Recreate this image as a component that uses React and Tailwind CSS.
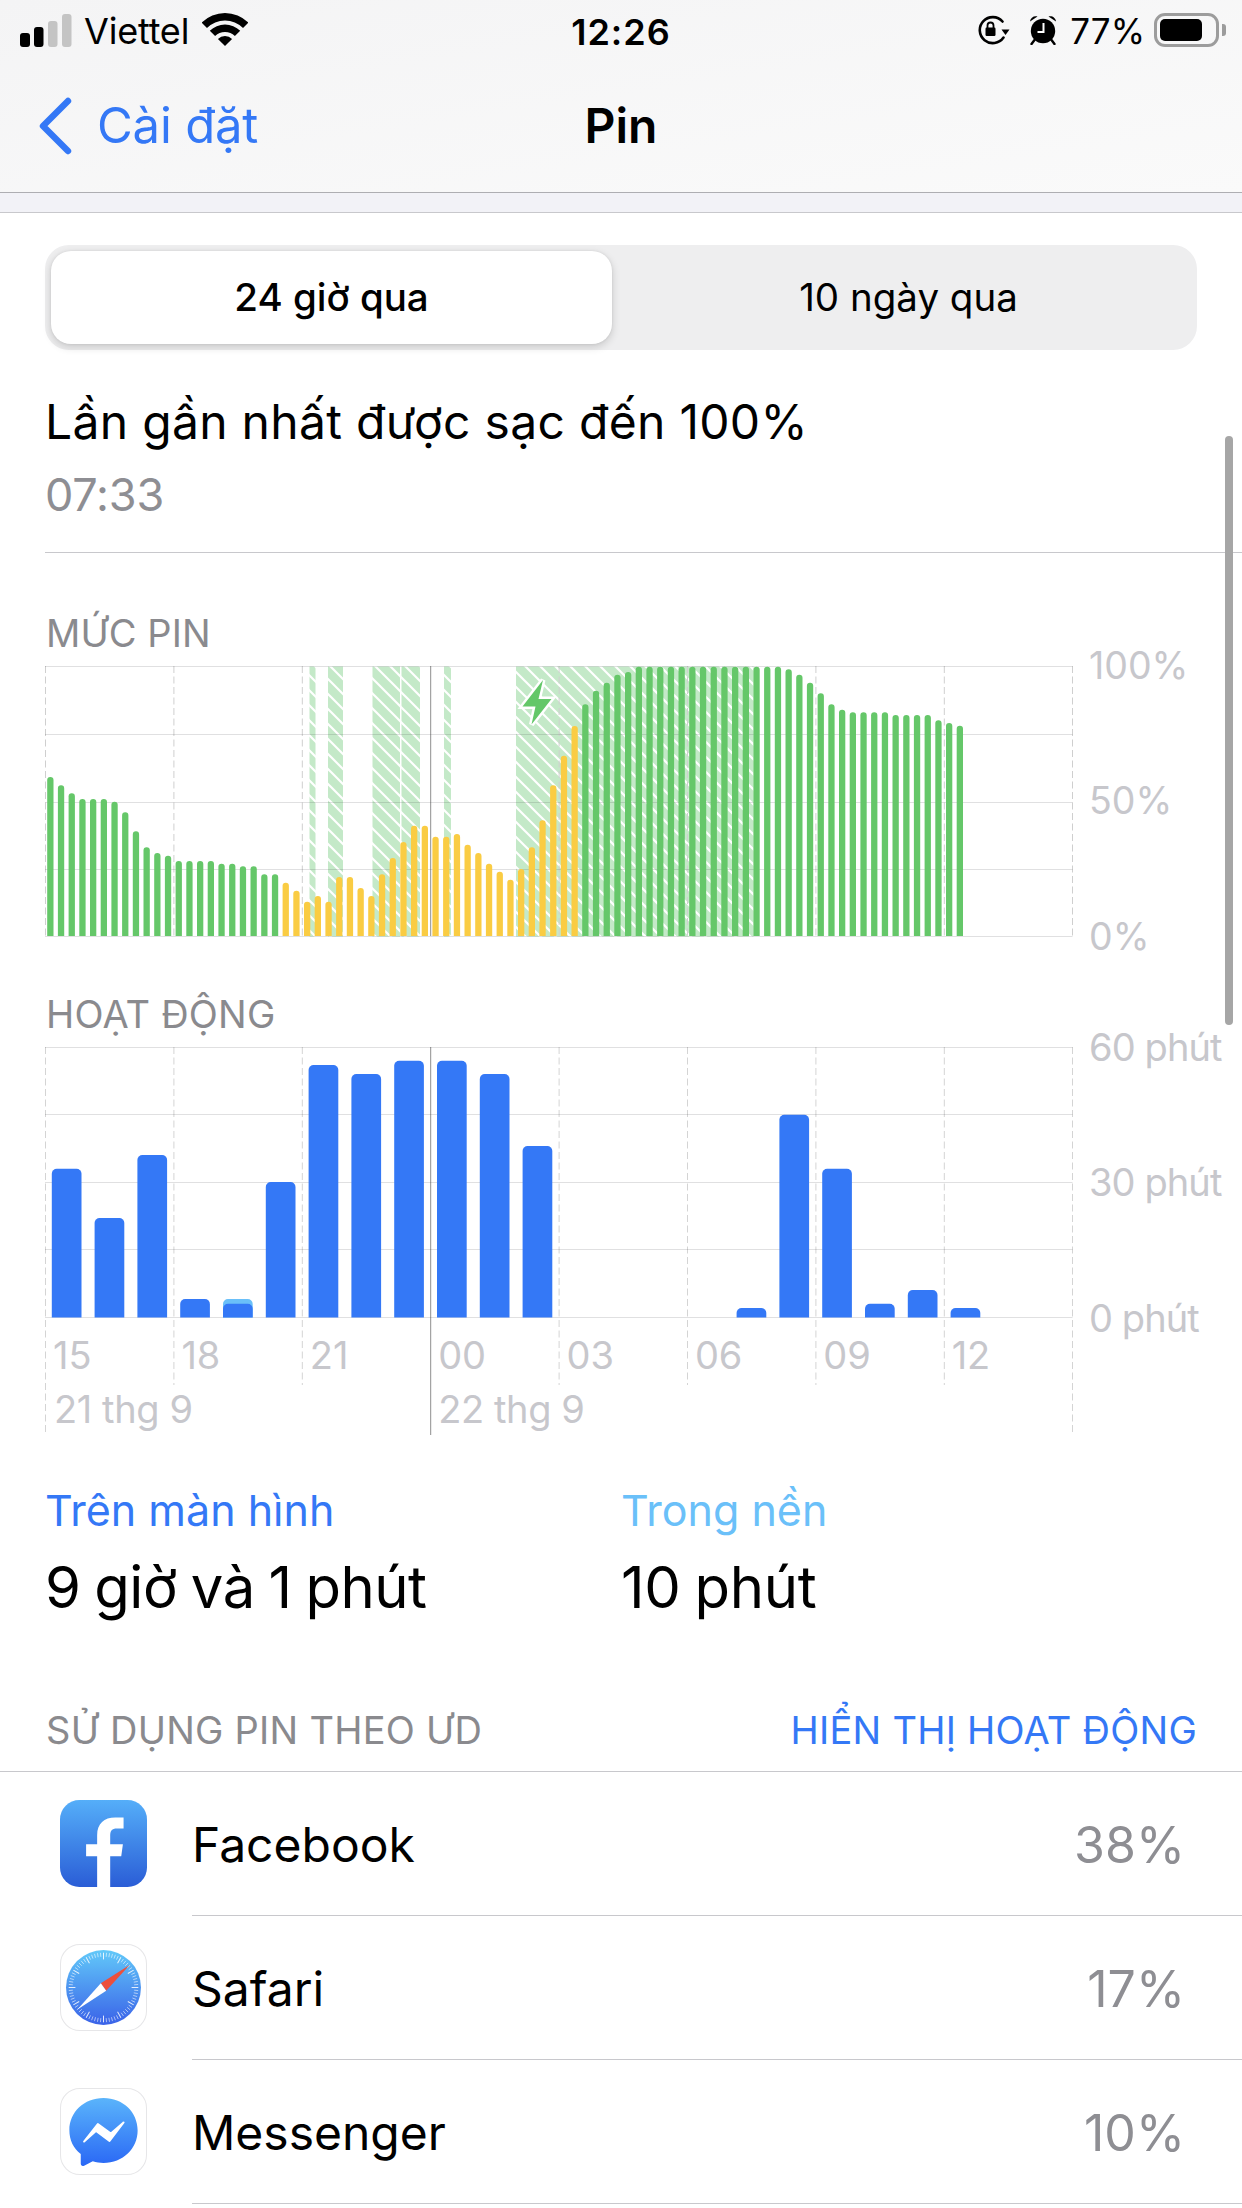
import React from "react";

const BLUE = "#3478f6";

const batteryTops = [
  412,437,461,478,478,478,486,518,575,623,640,648,664,664,664,664,672,672,680,680,704,704,
  729,753,786,769,786,712,712,745,769,704,655,607,558,558,591,591,583,615,640,672,696,720,688,623,542,437,348,259,
  194,153,129,105,97,81,81,81,81,81,81,81,81,81,81,81,81,81,81,89,105,129,161,194,210,218,218,218,218,226,226,226,226,242,250,258,
];
const isYellow = (i) => i >= 22 && i <= 49;

const hatchRanges = [[309.5,315.5],[328,343],[372.5,400],[401.5,420],[444,451],[516,753.5]];

const activity = [447,595,406,838,838,487,136,163,123,123,163,379,null,null,null,null,865,285,447,852,811,865];

function sector(r1, r2) {
  const s = Math.SQRT1_2;
  const c = [23, 33];
  if (r1 === 0)
    return `M${c[0]} ${c[1]}L${c[0]-r2*s} ${c[1]-r2*s}A${r2} ${r2} 0 0 1 ${c[0]+r2*s} ${c[1]-r2*s}Z`;
  return `M${c[0]-r1*s} ${c[1]-r1*s}L${c[0]-r2*s} ${c[1]-r2*s}A${r2} ${r2} 0 0 1 ${c[0]+r2*s} ${c[1]-r2*s}L${c[0]+r1*s} ${c[1]-r1*s}A${r1} ${r1} 0 0 0 ${c[0]-r1*s} ${c[1]-r1*s}Z`;
}

function Signal() {
  return (
    <svg width="52" height="33" viewBox="0 0 52 33" className="shrink-0">
      <rect x="0" y="19" width="10" height="14" rx="3" fill="#000" />
      <rect x="14" y="13" width="9.5" height="20" rx="3" fill="#000" />
      <rect x="28" y="7" width="9.5" height="26" rx="3" fill="#c4c4c4" />
      <rect x="42" y="0" width="9.5" height="33" rx="3" fill="#c4c4c4" />
    </svg>
  );
}

function Wifi() {
  return (
    <svg width="46" height="34" viewBox="0 0 46 34" className="shrink-0">
      <path d={sector(25.5, 33)} fill="#000" />
      <path d={sector(14, 21.5)} fill="#000" />
      <path d={sector(0, 10)} fill="#000" />
    </svg>
  );
}

function RotationLock() {
  return (
    <svg width="33" height="30" viewBox="0 0 33 30" className="shrink-0">
      <path d="M26.5 22.5A13 13 0 1 1 25.5 6.5" fill="none" stroke="#000" strokeWidth="2.6" strokeLinecap="round" />
      <path d="M24.5 14.5L32.5 14.5L28.5 20Z" fill="#000" />
      <rect x="8.5" y="12.5" width="10" height="8.5" rx="1.2" fill="#000" />
      <path d="M10.5 13V10.5a3 3 0 0 1 6 0V13" fill="none" stroke="#000" strokeWidth="1.8" />
    </svg>
  );
}

function Alarm() {
  return (
    <svg width="28" height="30" viewBox="0 0 28 30" className="shrink-0">
      <circle cx="14" cy="16" r="12.2" fill="#000" />
      <path d="M14.5 8V17H8.5" fill="none" stroke="#fff" strokeWidth="2" />
      <path d="M1 6.5C1.5 2.5 5 0.5 8.5 1.5Z" fill="#000" />
      <path d="M27 6.5C26.5 2.5 23 0.5 19.5 1.5Z" fill="#000" />
      <path d="M5.5 25L2.5 29M22.5 25L25.5 29" stroke="#000" strokeWidth="2.4" strokeLinecap="round" />
    </svg>
  );
}

function Battery() {
  return (
    <div className="flex items-center shrink-0 gap-[3px]">
      <div className="w-[65px] h-[34px] rounded-[11px] border-[3px] border-[#9c9c9c] p-[3px] box-border">
        <div className="w-[42px] h-[22px] rounded-[5px] bg-black" />
      </div>
      <div className="w-[4px] h-[12px] rounded-r-[3px] bg-[#9c9c9c]" />
    </div>
  );
}

function StatusBar() {
  return (
    <div className="relative h-[60px] flex items-center justify-between pl-[20px] pr-[16px] text-black">
      <div className="flex items-center">
        <Signal />
        <span className="ml-[12px] pt-[2px] text-[36px] leading-[60px] tracking-[-0.2px]">Viettel</span>
        <span className="ml-[13px] flex"><Wifi /></span>
      </div>
      <span className="absolute left-0 right-0 pt-[3px] text-center text-[36px] leading-[60px] font-semibold tracking-[1px]">12:26</span>
      <div className="flex items-center">
        <RotationLock />
        <span className="ml-[19px] flex"><Alarm /></span>
        <span className="ml-[13px] mr-[9px] pt-[2px] text-[35px] leading-[60px]">77%</span>
        <Battery />
      </div>
    </div>
  );
}

function NavBar() {
  return (
    <div className="relative h-[132px] pt-[29px] flex items-start">
      <svg width="40" height="62" viewBox="0 0 40 62" className="ml-[36px] mt-[6px] shrink-0">
        <path d="M32 6L7 31L32 56" fill="none" stroke={BLUE} strokeWidth="6.4" strokeLinecap="round" strokeLinejoin="round" />
      </svg>
      <span className="ml-[21px] text-[49px] leading-[74px] tracking-[-0.2px] text-[#3478f6]">Cài đặt</span>
      <span className="absolute left-0 right-0 top-[29px] text-center text-[48px] leading-[74px] font-semibold text-black">Pin</span>
    </div>
  );
}

function Segmented() {
  return (
    <div className="mx-[45px] mt-[32px] h-[105px] rounded-[24px] bg-[#eeeeef] p-[6px] flex text-[38.5px] text-black">
      <div className="w-[561px] rounded-[20px] bg-white shadow-[0_3px_8px_rgba(0,0,0,0.16),0_0_3px_rgba(0,0,0,0.08)] flex items-center justify-center font-[550]">
        24 giờ qua
      </div>
      <div className="flex-1 pl-[14px] flex items-center justify-center">10 ngày qua</div>
    </div>
  );
}

function barPath(x, top, bottom, w, r) {
  const t = Math.min(top + r, bottom);
  return `M${x} ${bottom}V${t}A${r} ${r} 0 0 1 ${x + r} ${top}H${x + w - r}A${r} ${r} 0 0 1 ${x + w} ${t}V${bottom}Z`;
}

const GRID_X = [0, 128.4, 256.8, 385.2, 513.6, 642, 770.4, 898.8, 1027];

function BatteryChart() {
  return (
    <div className="relative ml-[45px] mt-[11px] h-[271px] flex">
      <svg width="1029" height="271" viewBox="0 0 1029 271" className="shrink-0">
        <defs>
          <pattern id="hatch" width="15" height="15" patternUnits="userSpaceOnUse">
            <rect width="15" height="15" fill="#c4e9c8" />
            <path d="M-3 -3L18 18M-3 12L3 18M12 -3L18 3" stroke="#fff" strokeWidth="2.2" />
          </pattern>
        </defs>
        {hatchRanges.map(([a, b]) => (
          <rect key={a} x={a - 45} y="0.5" width={b - a} height="270" fill="url(#hatch)" />
        ))}
        {GRID_X.map((x, i) => (
          <line key={x} x1={x + 0.5} x2={x + 0.5} y1="0" y2="270" stroke={i === 3 ? "#8e8e8e" : "#cfcfcf"} strokeWidth="1" strokeDasharray={i === 3 ? undefined : "7 3.5"} />
        ))}
        {[0.5, 68.5, 136.5, 203.5, 270.5].map((y) => (
          <line key={y} x1="0" x2="1027.5" y1={y} y2={y} stroke="#3c3c43" strokeOpacity="0.16" />
        ))}
        {batteryTops.map((t, i) => {
          const x = 2.2 + 10.7 * i;
          const top = (t - 79) / 3;
          return <path key={i} d={barPath(x, top, 270, 6.3, 3.1)} fill={isYellow(i) ? "#facc43" : "#65c769"} />;
        })}
        <path d="M498 14L477.5 40.5L490.5 40.5L486.5 58.5L506.5 33L493.5 33Z" fill="#63c768" stroke="#fff" strokeWidth="5" strokeLinejoin="miter" paintOrder="stroke" />
      </svg>
      <div className="ml-[15px] flex flex-col justify-between h-[271px] text-[37.5px] text-[#c7c7cc]">
        <span className="h-0 flex items-center">100%</span>
        <span className="h-0 flex items-center">50%</span>
        <span className="h-0 flex items-center">0%</span>
      </div>
    </div>
  );
}

function ActivityChart() {
  const hours = ["15", "18", "21", "00", "03", "06", "09", "12"];
  return (
    <div className="relative ml-[45px] mt-[11px] h-[389px] flex">
      <svg width="1029" height="389" viewBox="0 0 1029 389" className="shrink-0">
        {GRID_X.map((x, i) => {
          const long = i === 0 || i === 3 || i === 8;
          return (
            <line key={x} x1={x + 0.5} x2={x + 0.5} y1="0" y2={long ? 388 : 338} stroke={i === 3 ? "#8e8e8e" : "#d4d4d4"} strokeDasharray={i === 3 ? undefined : "7 3.5"} />
          );
        })}
        {[0.5, 67.5, 135.5, 202.5, 270.5].map((y) => (
          <line key={y} x1="0" x2="1027.5" y1={y} y2={y} stroke="#3c3c43" strokeOpacity="0.16" />
        ))}
        {activity.map((t, i) => {
          if (t === null) return null;
          const x = 6.8 + 42.8 * i;
          const top = (t - 82) / 3;
          return (
            <g key={i}>
              <path d={barPath(x, top, 270.5, 29.7, 5)} fill={i === 4 ? "#6ac0f9" : BLUE} />
              {i === 4 && <path d={barPath(x, (852 - 82) / 3, 270.5, 29.7, 5)} fill={BLUE} />}
            </g>
          );
        })}
      </svg>
      <div className="ml-[15px] flex flex-col justify-between h-[271px] text-[38px] tracking-[-0.9px] text-[#c7c7cc]">
        <span className="h-0 flex items-center whitespace-nowrap">60 phút</span>
        <span className="h-0 flex items-center whitespace-nowrap">30 phút</span>
        <span className="h-0 flex items-center whitespace-nowrap">0 phút</span>
      </div>
      <div className="absolute left-0 top-[286px] w-[1027px] flex text-[38px] leading-[44px] text-[#c7c7cc]">
        {hours.map((h) => (
          <span key={h} className="w-[128.4px] pl-[8px]">{h}</span>
        ))}
      </div>
      <div className="absolute left-0 top-[340px] w-[1027px] flex text-[38px] leading-[44px] tracking-[-0.4px] text-[#c7c7cc]">
        <span className="w-[385.2px] pl-[9px]">21 thg 9</span>
        <span className="pl-[8px]">22 thg 9</span>
      </div>
    </div>
  );
}

function FacebookIcon() {
  return (
    <svg width="87" height="87" viewBox="0 0 260 260" className="shrink-0">
      <defs>
        <linearGradient id="fb" x1="0" y1="0" x2="0" y2="1">
          <stop offset="0" stopColor="#55aef9" />
          <stop offset="1" stopColor="#2a5dd6" />
        </linearGradient>
      </defs>
      <rect width="260" height="260" rx="58" fill="url(#fb)" />
      <path d="M111 260V168H78V132H111V105C111 70 132 52 165 52H190V85H170C155 85 150 92 150 107V132H188L183 168H150V260Z" fill="#fff" />
    </svg>
  );
}

function SafariIcon() {
  const ticks = Array.from({ length: 72 }, (_, i) => i);
  return (
    <svg width="87" height="87" viewBox="0 0 260 260" className="shrink-0">
      <defs>
        <linearGradient id="sf" x1="0" y1="0" x2="0" y2="1">
          <stop offset="0" stopColor="#62c9f9" />
          <stop offset="1" stopColor="#3a62e8" />
        </linearGradient>
      </defs>
      <rect x="1.5" y="1.5" width="257" height="257" rx="58" fill="#fff" stroke="#e6e6e8" strokeWidth="3" />
      <circle cx="130" cy="130" r="112" fill="url(#sf)" />
      {ticks.map((i) => {
        const a = (i * Math.PI) / 36;
        const r2 = 104;
        const r1 = i % 6 === 0 ? 84 : 92;
        return (
          <line key={i} x1={130 + r1 * Math.sin(a)} y1={130 - r1 * Math.cos(a)} x2={130 + r2 * Math.sin(a)} y2={130 - r2 * Math.cos(a)} stroke="#fff" strokeOpacity="0.85" strokeWidth={i % 6 === 0 ? 3 : 2} />
        );
      })}
      <path d="M208 63L138 140L122 117Z" fill="#ec4f3d" />
      <path d="M52 196L122 117L138 140Z" fill="#fff" />
    </svg>
  );
}

function MessengerIcon() {
  return (
    <svg width="87" height="87" viewBox="0 0 260 260" className="shrink-0">
      <defs>
        <linearGradient id="ms" x1="0" y1="0" x2="0" y2="1">
          <stop offset="0" stopColor="#5ab4fb" />
          <stop offset="1" stopColor="#2a68f5" />
        </linearGradient>
      </defs>
      <rect x="1.5" y="1.5" width="257" height="257" rx="58" fill="#fff" stroke="#e6e6e8" strokeWidth="3" />
      <path d="M130 30C72 30 28 72 28 126C28 155 40 180 62 197V226C62 232 67 235 72 232L98 219C108 222 119 224 130 224C188 224 232 181 232 127C232 72 188 30 130 30Z" fill="url(#ms)" />
      <path d="M72 160L113 108L152 136L190 103L148 158L108 128Z" fill="#fff" stroke="#fff" strokeWidth="6" strokeLinejoin="round" />
    </svg>
  );
}

function AppRow({ icon, name, pct }) {
  return (
    <div className="flex items-center h-[144px] pl-[60px]">
      <div className="mb-[1px] flex">{icon}</div>
      <div className="ml-[45px] flex-1 h-[144px] pt-[3px] border-b border-[#c8c8cc] flex items-center justify-between pr-[57px] text-[48px]">
        <span className="text-black">{name}</span>
        <span className="text-[#8e8e93] text-[50px]">{pct}</span>
      </div>
    </div>
  );
}

export default function App() {
  return (
    <div className="relative w-[1242px] h-[2208px] overflow-hidden bg-white font-['Inter',sans-serif]">
      <div className="h-[193px] bg-gradient-to-br from-[#f4f4f5] to-[#fafafa] border-b border-[#aeaeb2]">
        <StatusBar />
        <NavBar />
      </div>
      <div className="h-[20px] bg-[#f2f2f7] border-b border-[#c8c8cc]" />

      <Segmented />

      <div className="ml-[45px] mt-[42px] text-[48px] leading-[60px] text-black tracking-[0.3px]">Lần gần nhất được sạc đến 100%</div>
      <div className="ml-[45px] mt-[18px] text-[45px] leading-[50px] tracking-[-0.2px] text-[#8e8e93]">07:33</div>
      <div className="ml-[45px] mt-[32px] border-b border-[#c8c8cc]" />

      <div className="ml-[46px] mt-[58px] text-[38px] leading-[44px] tracking-[0.1px] text-[#8a8a8e]">MỨC PIN</div>
      <BatteryChart />

      <div className="ml-[46px] mt-[55px] text-[38px] leading-[44px] tracking-[0.2px] text-[#8a8a8e]">HOẠT ĐỘNG</div>
      <ActivityChart />

      <div className="mt-[48px] ml-[45px] flex">
        <div className="w-[576px]">
          <div className="text-[43px] leading-[52px] text-[#3478f6]">Trên màn hình</div>
          <div className="mt-[13px] text-[58px] leading-[76px] tracking-[-0.5px] [word-spacing:-2px] text-black">9 giờ và 1 phút</div>
        </div>
        <div>
          <div className="text-[43px] leading-[52px] text-[#6ac0f9]">Trong nền</div>
          <div className="mt-[13px] text-[58px] leading-[76px] tracking-[-0.3px] [word-spacing:-2px] text-black">10 phút</div>
        </div>
      </div>

      <div className="mt-[83px] ml-[46px] mr-[45px] flex justify-between text-[38px] leading-[44px] tracking-[0.25px]">
        <span className="text-[#8a8a8e]">SỬ DỤNG PIN THEO ƯD</span>
        <span className="text-[#3478f6]">HIỂN THỊ HOẠT ĐỘNG</span>
      </div>
      <div className="mt-[19px] border-b border-[#c8c8cc]" />

      <AppRow icon={<FacebookIcon />} name="Facebook" pct="38%" />
      <AppRow icon={<SafariIcon />} name="Safari" pct="17%" />
      <AppRow icon={<MessengerIcon />} name="Messenger" pct="10%" />

      <div className="absolute left-[1225px] top-[436px] w-[8px] h-[589px] rounded-full bg-[#a6a6a6]" />
    </div>
  );
}
